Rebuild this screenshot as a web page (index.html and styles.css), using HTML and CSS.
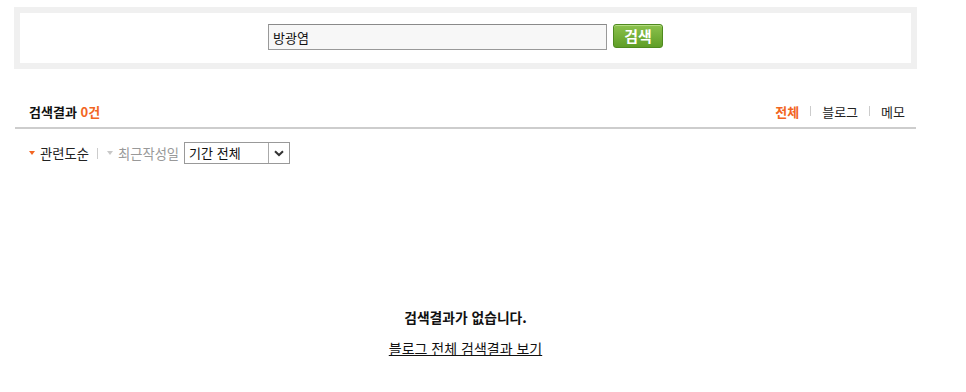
FILE: index.html
```html
<!DOCTYPE html>
<html lang="ko">
<head>
<meta charset="utf-8">
<link rel="stylesheet" href="styles.css">
</head>
<body>
<div class="page">
  <div class="search-box">
    <div class="search-inner">
      <input class="search-input" type="text" value="방광염">
      <button class="search-btn" type="button">검색</button>
    </div>
  </div>

  <div class="result-head">
    <div class="result-title">검색결과 <span class="count">0건</span></div>
    <ul class="tabs">
      <li class="tab on">전체</li>
      <li class="sep"></li>
      <li class="tab">블로그</li>
      <li class="sep"></li>
      <li class="tab">메모</li>
    </ul>
  </div>

  <div class="sort-row">
    <span class="sort on"><i class="tri"></i>관련도순</span>
    <span class="bar"></span>
    <span class="sort"><i class="tri"></i>최근작성일</span>
    <div class="period">
      <span class="period-text">기간 전체</span>
      <span class="period-arrow">
        <svg width="10" height="7" viewBox="0 0 10 7"><path d="M1 1.2 L5 5 L9 1.2" fill="none" stroke="#333" stroke-width="2"/></svg>
      </span>
    </div>
  </div>

  <div class="empty">
    <p class="empty-msg">검색결과가 없습니다.</p>
    <a class="empty-link" href="#">블로그 전체 검색결과 보기</a>
  </div>
</div>
</body>
</html>
```

FILE: styles.css
```css
* { box-sizing: border-box; }
body {
  margin: 0;
  font-family: "Noto Sans CJK KR", "Noto Sans", sans-serif;
  font-size: 13px;
  color: #000;
  background: #fff;
}
.page {
  width: 903px;
  margin-left: 14px;
  padding-top: 7px;
}
.search-box {
  background: #f0f0f0;
  padding: 6px;
  height: 62px;
}
.search-inner {
  background: #fff;
  height: 50px;
  display: flex;
  justify-content: center;
  align-items: flex-start;
  padding-top: 11px;
  gap: 6px;
}
.search-input {
  width: 339px;
  height: 26px;
  margin: 0;
  border: 1px solid #999;
  border-top-color: #8a8a8a;
  background: #f7f7f7;
  font-family: "Noto Sans CJK KR", sans-serif;
  font-size: 13px;
  color: #111;
  padding: 0 4px;
  outline: none;
}
.search-btn {
  width: 50px;
  height: 24px;
  margin: 0;
  border: 1px solid #4f8a1f;
  border-radius: 3px;
  background: linear-gradient(#8cc24d, #5f9e27);
  color: #fff;
  font-family: "Noto Sans CJK KR", sans-serif;
  font-size: 15px;
  font-weight: 700;
  line-height: 20px;
  padding: 0;
  box-shadow: inset 0 1px 0 #b5dc82;
}
.result-head {
  margin-top: 26px;
  height: 34px;
  border-bottom: 2px solid #cdcdcd;
  margin-left: 1px;
  margin-right: 1px;
  display: flex;
  justify-content: space-between;
  align-items: center;
  padding: 0 11px 0 14px;
}
.result-title {
  font-weight: 700;
  font-size: 13px;
  color: #111;
}
.count { color: #f26522; }
.tabs {
  list-style: none;
  margin: 0;
  padding: 0;
  display: flex;
  align-items: center;
  gap: 11px;
}
.tab { font-size: 13px; color: #222; }
.tab.on { color: #f26522; font-weight: 700; }
.sep {
  width: 1px;
  height: 10px;
  background: #ccc;
}
.sort-row {
  display: flex;
  align-items: center;
  padding-left: 15px;
  margin-top: 13px;
  height: 22px;
}
.sort {
  display: flex;
  align-items: center;
  color: #999;
  font-size: 13.3px;
}
.sort.on { color: #222; }
.tri {
  width: 0;
  height: 0;
  border-left: 3.5px solid transparent;
  border-right: 3.5px solid transparent;
  border-top: 4px solid #c8c8c8;
  margin-right: 5px;
}
.sort.on .tri { border-top-color: #f26522; }
.bar {
  width: 1px;
  height: 11px;
  background: #ccc;
  margin: 0 9px 0 8px;
}
.period {
  margin-left: 5px;
  width: 106px;
  height: 22px;
  border: 1px solid #999;
  display: flex;
  align-items: stretch;
}
.period-text {
  flex: 1;
  font-size: 13px;
  color: #111;
  padding-left: 4px;
  line-height: 20px;
}
.period-arrow {
  width: 21px;
  border-left: 1px solid #aaa;
  display: flex;
  align-items: center;
  justify-content: center;
}
.empty {
  margin-top: 143px;
  text-align: center;
}
.empty-msg {
  margin: 0;
  font-weight: 700;
  font-size: 13.8px;
  color: #111;
  line-height: 20px;
}
.empty-link {
  display: inline-block;
  margin-top: 11px;
  font-size: 14px;
  color: #111;
  text-decoration: underline;
  line-height: 20px;
}
```
